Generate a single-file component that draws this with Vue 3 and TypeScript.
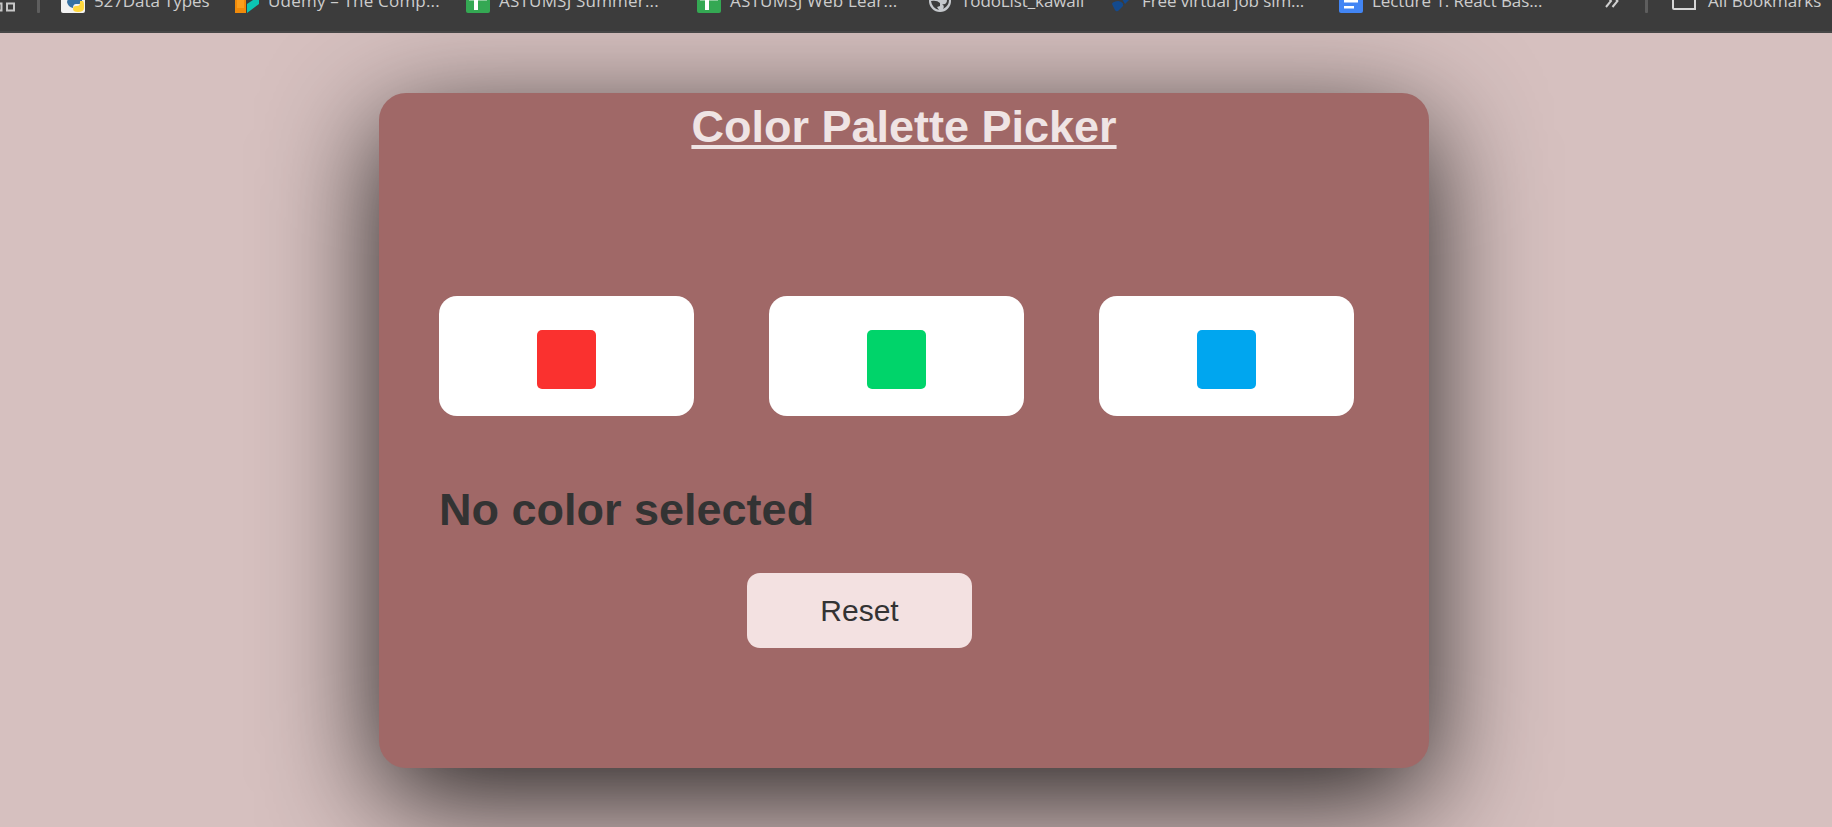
<script setup lang="ts">
import { ref } from 'vue'

interface Bookmark { label: string; icon: string }
interface Swatch { name: string; hex: string }

const bookmarks: Bookmark[] = [
  { label: '527Data Types', icon: 'python' },
  { label: 'Udemy – The Comp...', icon: 'blocks' },
  { label: 'ASTUMSJ Summer...', icon: 'sheet' },
  { label: 'ASTUMSJ Web Lear...', icon: 'sheet' },
  { label: 'TodoList_kawaii', icon: 'globe' },
  { label: 'Free virtual job sim...', icon: 'forage' },
  { label: 'Lecture 1: React Bas...', icon: 'doc' },
]
const swatches: Swatch[] = [
  { name: 'Red', hex: '#fa312f' },
  { name: 'Green', hex: '#00d46a' },
  { name: 'Blue', hex: '#00a6ef' },
]
const selected = ref<Swatch | null>(null)
</script>

<template>
  <div class="page">
    <nav class="bar">
      <div class="row">
        <svg class="apps" width="15" height="24" viewBox="0 0 15 24" fill="none" stroke="#c7c7c7" stroke-width="2">
          <path d="M-5 14.500h6.500v7h-6.500zM7 14.500h7v7h-7zM7 3.500h7v6h-7z" />
        </svg>
        <i class="sep" />
        <div v-for="(b, i) in bookmarks" :key="b.label" class="bookmark" :class="'b' + i">
          <svg width="24" height="24" viewBox="0 0 24 24">
            <g v-if="b.icon === 'python'">
              <rect width="24" height="24" rx="2" fill="#f2f2f2" />
              <path d="M9 2h8q4 0 4 4v6q0 3-3 3h-3q-3 0-3 4-5-1-6-6z" fill="#3571a3" />
              <path d="M19 12h3q1 1 1 4v3q0 4-6 4-5 0-5-3 0-3 3-3h1q3 0 3-3z" fill="#ffd83d" />
            </g>
            <g v-else-if="b.icon === 'blocks'">
              <path d="M0 0h11v24H0z" fill="#f08a0a" />
              <path d="M2 8h7v11H2z" fill="#fb9e1c" />
              <path d="M12 15l12-8v8l-12 9z" fill="#0bc4b2" />
            </g>
            <g v-else-if="b.icon === 'sheet'">
              <rect width="24" height="24" rx="2" fill="#34a853" />
              <path d="M3 11h18v1H3z" fill="#8acb9b" />
              <path d="M8 3h4v18H8z" fill="#fff" />
            </g>
            <g v-else-if="b.icon === 'globe'">
              <circle cx="12" cy="12" r="11" fill="#c5c8cc" />
              <path d="M3 12q6-1 9 2v3l-3 1 2 3Q4 19 3 12zM14 15q5 1 5-4h2q0 6-6 9 2-3-1-5z" fill="#3c3c3c" />
            </g>
            <g v-else-if="b.icon === 'forage'" fill="#134a8e">
              <path d="M3 15q0-2 6-3 6 1 5 5l-5 5q-2 1-3-1zM13 10l6-5 1 6-4 4z" />
            </g>
            <g v-else>
              <rect width="24" height="24" rx="2" fill="#4285f4" />
              <path d="M5 5h14v2.500H5zM5 11h14v2.500H5zM5 17h10v2.500H5z" fill="#fff" />
            </g>
          </svg>
          <span>{{ b.label }}</span>
        </div>
        <svg class="more" width="14" height="24" viewBox="0 0 14 24" fill="none" stroke="#d0d0d0" stroke-width="2">
          <path d="M1.500 6.500l4.500 5.500-5 6M8 6.500l4.500 5.500-5 6" />
        </svg>
        <i class="sep" />
        <div class="bookmark all">
          <svg width="24" height="24" viewBox="0 0 24 24" fill="none" stroke="#d6d6d6" stroke-width="2">
            <path d="M1 19V3h8l3 3h11v14H2q-1 0-1-1z" />
          </svg>
          <span>All Bookmarks</span>
        </div>
      </div>
    </nav>
    <main class="stage">
      <section class="card">
        <h1 class="title">Color Palette Picker</h1>
        <div class="choices">
          <button v-for="s in swatches" :key="s.name" class="choice" @click="selected = s">
            <span class="square" :style="{ background: s.hex }" />
          </button>
        </div>
        <h2 class="status">{{ selected ? selected.name : 'No color selected' }}</h2>
        <button class="reset" @click="selected = null">Reset</button>
      </section>
    </main>
  </div>
</template>

<style>
body { margin: 0; overflow: hidden; background: #d6c0bf; }
</style>

<style scoped>
.page {
  height: 827px;
  overflow: hidden;
  display: flex;
  flex-direction: column;
  font-family: "Liberation Sans", Arial, sans-serif;
}
.bar {
  box-sizing: border-box;
  flex: none;
  height: 33px;
  overflow: hidden;
  background: #3c3c3c;
  border-bottom: 2px solid #474747;
  position: relative;
  z-index: 1;
}
.row {
  display: grid;
  grid-template-columns: 37px 24px 174px 231px 231px 231px 181px 230px 266px 40px 27px 160px;
  height: 24px;
  margin-top: -11px;
}
.sep { width: 3px; height: 24px; border-radius: 1px; background: #5e5e5e; }
.bookmark {
  display: flex;
  align-items: center;
  gap: 9px;
  white-space: nowrap;
  color: #cdcdcd;
  font: 17px/24px "Open Sans", "Noto Sans", sans-serif;
}
.bookmark svg { flex: none; }
.b1 span, .b2 span, .b3 span { letter-spacing: .2px; }
.b0 span, .b4 span, .b5 span, .b6 span { letter-spacing: -.1px; }
.all { gap: 12px; }
.stage { flex: 1; display: flex; justify-content: center; align-items: flex-start; padding: 60px 24px 0 0; }
.card {
  box-sizing: border-box;
  width: 1050px;
  height: 675px;
  padding: 8px 60px 0;
  border-radius: 27px;
  background: #a06867;
  box-shadow: 0 30px 114px rgba(0, 0, 0, .84);
  display: flex;
  flex-direction: column;
}
.title {
  margin: 0;
  text-align: center;
  font-size: 45px;
  line-height: 52px;
  color: #efe4e4;
  text-decoration: underline;
  text-decoration-thickness: 4px;
  text-underline-offset: 3px;
  text-decoration-skip-ink: none;
}
.choices { display: flex; gap: 75px; margin-top: 143px; }
.choice {
  width: 255px;
  height: 120px;
  padding: 7px 0 0;
  border: 0;
  border-radius: 18px;
  background: #fff;
  display: flex;
  align-items: center;
  justify-content: center;
}
.square { width: 59px; height: 59px; border-radius: 5px; }
.status {
  margin: 68px 0 0;
  font-size: 45px;
  line-height: 52px;
  color: #333;
}
.reset {
  width: 225px;
  height: 75px;
  margin: 37px 0 0 308px;
  padding: 0;
  border: 0;
  border-radius: 13px;
  background: #f3e1e1;
  color: #333;
  font: 30px "Liberation Sans", Arial, sans-serif;
}
</style>
